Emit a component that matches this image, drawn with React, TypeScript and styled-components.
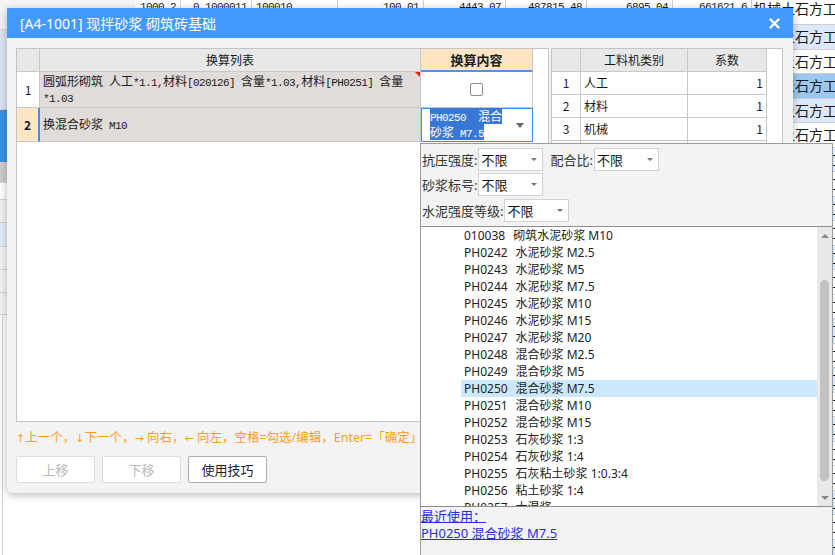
import React from "react";
import styled, { createGlobalStyle } from "styled-components";

const UI = `"Noto Sans", "Noto Sans CJK SC", sans-serif`;
const SONG = `"Noto Sans CJK SC", sans-serif`;

const GlobalStyle = createGlobalStyle`
  html, body { margin: 0; padding: 0; background: #fff; }
  body { font-family: ${UI}; color: #1a1a1a; }
  * { box-sizing: border-box; }
`;

// ---------- background sheet ----------
const Screen = styled.div`
  position: relative;
  width: 835px;
  height: 555px;
  overflow: hidden;
  background: #fff;
`;

const Back = styled.div`
  display: flex;
  height: 100%;
`;

const SidePane = styled.div`
  width: 135px;
  display: flex;
  flex-direction: column;
`;

const SideBlock = styled.div<{ $h: number; $bg: string }>`
  flex: 0 0 ${(p) => p.$h}px;
  background: ${(p) => p.$bg};
  border-bottom: 1px solid #d4d4d4;
`;

const SideRest = styled.div`
  flex: 1;
  margin-left: 2px;
  border-left: 1px solid #cfcfcf;
`;

const Sheet = styled.div`
  flex: 1;
  display: flex;
  flex-direction: column;
`;

const SheetRow = styled.div<{ $top?: boolean }>`
  flex: 0 0 ${(p) => (p.$top ? 25 : 24.5)}px;
  display: grid;
  grid-template-columns: 46px 71px 86px 86px 82px 81px 86px 79px 1fr;
`;

const SheetCell = styled.div<{ $left?: boolean; $bg: string; $on: boolean }>`
  border-right: ${(p) => (p.$on ? "1px solid #cfcfcf" : "none")};
  border-bottom: ${(p) => (p.$on ? "1px solid #cfcfcf" : "none")};
  background: ${(p) => (p.$on ? p.$bg : "transparent")};
  padding: 0 4px;
  font-family: "Liberation Mono", monospace;
  font-size: 11px;
  letter-spacing: -0.6px;
  line-height: 15px;
  text-align: ${(p) => (p.$left ? "left" : "right")};
  white-space: nowrap;
  overflow: hidden;
`;

const SheetName = styled.div<{ $bg: string; $top?: boolean }>`
  display: flex;
  align-items: ${(p) => (p.$top ? "flex-start" : "center")};
  padding-left: 1px;
  background: ${(p) => p.$bg};
  border-bottom: 1px solid #cfcfcf;
  font-family: ${SONG};
  font-size: 14px;
  line-height: 17px;
  white-space: nowrap;
  overflow: hidden;
`;

// ---------- dialog ----------
const Dialog = styled.div`
  position: absolute;
  left: 7px;
  top: 8px;
  width: 786px;
  height: 485px;
  background: #f3f3f3;
  border-radius: 2px 2px 5px 5px;
  box-shadow: 0 2px 9px rgba(0, 0, 0, 0.28);
  display: flex;
  flex-direction: column;
`;

const TitleBar = styled.div`
  flex: 0 0 30px;
  background: #4499ff;
  color: #fff;
  display: flex;
  align-items: center;
  justify-content: space-between;
  padding: 0 13px 0 13px;
  font-size: 14px;
`;

const Body = styled.div`
  flex: 1;
  padding: 10px 10px 10px 9px;
  display: flex;
  flex-direction: column;
`;

const Panels = styled.div`
  flex: 0 0 374px;
  display: flex;
  gap: 2px;
`;

const LeftGrid = styled.div`
  width: 533px;
  background: #fff;
  border: 1px solid #c4c4c4;
  display: grid;
  grid-template-columns: 23px 381px 112px 1fr;
  grid-template-rows: 23px 36px 34px;
  align-content: start;
  font-family: ${SONG};
  font-size: 12px;
`;

const RightGrid = styled.div`
  width: 232px;
  background: #fff;
  border: 1px solid #c4c4c4;
  display: grid;
  grid-template-columns: 29px 107px 79px 1fr;
  grid-template-rows: 23px 23px 23px 23px 23px;
  align-content: start;
  font-family: ${SONG};
  font-size: 12px;
`;

const Cell = styled.div<{
  $bg?: string;
  $align?: "left" | "center" | "right";
  $bold?: boolean;
  $size?: number;
  $mark?: "blue" | "active";
  $plain?: boolean;
}>`
  position: relative;
  display: flex;
  align-items: center;
  justify-content: ${(p) =>
    p.$align === "center" ? "center" : p.$align === "right" ? "flex-end" : "flex-start"};
  padding: 0 3px;
  background: ${(p) => p.$bg || "#fff"};
  border-right: ${(p) =>
    p.$plain ? "none" : p.$mark === "active" ? "2px solid #3e8fe9" : "1px solid #c8c8c8"};
  border-bottom: ${(p) =>
    p.$plain ? "none" : p.$mark === "blue" ? "2px solid #4a96ec" : "1px solid #c8c8c8"};
  font-weight: ${(p) => (p.$bold ? 700 : 400)};
  font-size: ${(p) => p.$size || 12}px;
  line-height: 14px;
  color: #1a1a1a;
`;

const Corner = styled.span`
  position: absolute;
  right: 0;
  top: 0;
  width: 0;
  height: 0;
  border-top: 5px solid #ff1a1a;
  border-left: 5px solid transparent;
`;

const Half = styled.span`
  font-family: "Liberation Mono", monospace;
  font-size: 11px;
  letter-spacing: -0.6px;
`;

const Check = styled.span`
  width: 13px;
  height: 13px;
  border: 1px solid #8c8c8c;
  border-radius: 2px;
  background: #fff;
`;

const Editor = styled.div`
  grid-column: 3;
  grid-row: 3;
  border: 1px solid #3d8de8;
  background: #fff;
  display: flex;
  align-items: center;
  padding: 0 8px 0 8px;
`;

const EditorText = styled.div`
  width: 78px;
  font-family: ${SONG};
  font-size: 12px;
  line-height: 13px;
  white-space: pre-wrap;
  span.sel {
    background: #3778d6;
    color: #fff;
  }
`;

const Caret = styled.span`
  margin-left: auto;
  width: 0;
  height: 0;
  border-left: 4px solid transparent;
  border-right: 4px solid transparent;
  border-top: 5px solid #666;
`;

const Hint = styled.div`
  margin-top: 8px;
  height: 16px;
  line-height: 16px;
  font-size: 12.5px;
  color: #ff9d1c;
  white-space: nowrap;
`;

const Arrow = styled.span`
  font-family: "DejaVu Sans", sans-serif;
  font-size: 11px;
`;

const Buttons = styled.div`
  margin-top: 10px;
  display: flex;
  gap: 7px;
`;

const Btn = styled.button<{ $off?: boolean }>`
  width: 79px;
  height: 27px;
  background: #fff;
  border: 1px solid ${(p) => (p.$off ? "#dcdcdc" : "#adadad")};
  border-radius: 2px;
  font-family: ${UI};
  font-size: 13px;
  color: ${(p) => (p.$off ? "#b9b9b9" : "#1e1e1e")};
  padding: 0;
`;

// ---------- dropdown popup ----------
const Popup = styled.div`
  position: absolute;
  left: 420px;
  top: 143px;
  width: 413px;
  height: 412px;
  background: #f3f3f3;
  border: 1px solid #9c9c9c;
  border-bottom: none;
  display: flex;
  flex-direction: column;
`;

const Filters = styled.div`
  padding: 4px 0 4px 1px;
  display: flex;
  flex-direction: column;
  gap: 2px;
`;

const FilterRow = styled.div<{ $gap?: number }>`
  display: flex;
  align-items: center;
  height: 23px;
  margin-top: ${(p) => p.$gap || 0}px;
`;

const Label = styled.span`
  font-size: 13px;
  color: #333;
  margin-right: 1px;
`;

const Select = styled.div`
  width: 65px;
  height: 23px;
  background: #fff;
  border: 1px solid #d3d3d3;
  display: flex;
  align-items: center;
  justify-content: space-between;
  padding: 0 5px 0 2px;
  font-size: 13px;
  color: #111;
  margin-right: 7px;
`;

const SmallCaret = styled.span`
  width: 0;
  height: 0;
  border-left: 3px solid transparent;
  border-right: 3px solid transparent;
  border-top: 3px solid #777;
`;

const ListBox = styled.div`
  flex: 0 0 281px;
  background: #fff;
  border-top: 1px solid #8e8e8e;
  border-bottom: 1px solid #8e8e8e;
  display: flex;
  overflow: hidden;
`;

const Items = styled.div`
  flex: 1;
  padding-left: 40px;
  overflow: hidden;
`;

const Item = styled.div<{ $sel?: boolean }>`
  height: 17px;
  line-height: 17px;
  padding-left: 3px;
  font-size: 12px;
  color: #222;
  white-space: pre;
  background: ${(p) => (p.$sel ? "#cce8ff" : "transparent")};
`;

const ItemName = styled.span`
  margin-left: 8px;
`;

const ScrollBar = styled.div`
  flex: 0 0 15px;
  background: #e9e9e9;
  display: flex;
  flex-direction: column;
  align-items: center;
`;

const ScrollArrow = styled.div<{ $down?: boolean }>`
  flex: 0 0 17px;
  display: flex;
  align-items: center;
  justify-content: center;
  &::after {
    content: "";
    border-left: 4px solid transparent;
    border-right: 4px solid transparent;
    ${(p) => (p.$down ? "border-top: 4px solid #8a8a8a;" : "border-bottom: 4px solid #8a8a8a;")}
  }
`;

const Track = styled.div`
  flex: 1;
  width: 100%;
  display: flex;
  justify-content: center;
`;

const Thumb = styled.div`
  margin-top: 36px;
  width: 9px;
  height: 201px;
  border-radius: 5px;
  background: #c2c2c2;
`;

const Recent = styled.div`
  padding: 1px 0 0 0;
  display: flex;
  flex-direction: column;
  align-items: flex-start;
`;

const RecentLink = styled.a`
  font-size: 13px;
  line-height: 17px;
  color: #2a2ae6;
  text-decoration: underline;
`;

// ---------- data ----------
const sheetTop = ["1000.2", "0.1000011", "100010", "100.01", "4443.07", "487815.48", "6895.04", "661621.6"];
const rowBgs = ["#fff", "#dce8fb", "#fff", "#9bc8f2", "#dce8fb", "#fff", "#dce8fb", "#fff", "#dce8fb", "#fff", "#dce8fb", "#fff", "#fff", "#dce8fb", "#fff", "#dce8fb", "#fff", "#dce8fb", "#fff", "#fff", "#dce8fb", "#fff", "#dce8fb"];

const sideBlocks: [number, string][] = [
  [30, "#f5f5f5"],
  [80, "#dbe5f3"],
  [53, "#3d8fe8"],
  [20, "#cdcdcd"],
  [17, "#ffffff"],
  [23, "#f2f2f2"],
  [24, "#e4edfa"],
  [23, "#f4f4f4"],
  [23, "#f4f4f4"],
  [22, "#f4f4f4"],
];

const mortars: [string, string][] = [
  ["010038", "砌筑水泥砂浆 M10"],
  ["PH0242", "水泥砂浆 M2.5"],
  ["PH0243", "水泥砂浆 M5"],
  ["PH0244", "水泥砂浆 M7.5"],
  ["PH0245", "水泥砂浆 M10"],
  ["PH0246", "水泥砂浆 M15"],
  ["PH0247", "水泥砂浆 M20"],
  ["PH0248", "混合砂浆 M2.5"],
  ["PH0249", "混合砂浆 M5"],
  ["PH0250", "混合砂浆 M7.5"],
  ["PH0251", "混合砂浆 M10"],
  ["PH0252", "混合砂浆 M15"],
  ["PH0253", "石灰砂浆 1:3"],
  ["PH0254", "石灰砂浆 1:4"],
  ["PH0255", "石灰粘土砂浆 1:0.3:4"],
  ["PH0256", "粘土砂浆 1:4"],
  ["PH0257", "大混浆"],
];

const kinds = ["人工", "材料", "机械"];

// ascii runs drawn half width, like the song-style grid font
const Mixed = ({ text }: { text: string }) => (
  <>
    {text.split(/([\x20-\x7e]+)/).map((part, i) =>
      /^[\x20-\x7e]+$/.test(part) ? <Half key={i}>{part}</Half> : part
    )}
  </>
);

const CloseIcon = () => (
  <svg width="11" height="11" viewBox="0 0 11 11">
    <path d="M1.5 1.5 L9.5 9.5 M9.5 1.5 L1.5 9.5" stroke="#fff" strokeWidth="2.4" strokeLinecap="round" />
  </svg>
);

const Filter = ({ label }: { label: string }) => (
  <>
    <Label>{label}</Label>
    <Select>
      不限
      <SmallCaret />
    </Select>
  </>
);

export default function App() {
  return (
    <Screen>
      <GlobalStyle />
      <Back>
        <SidePane>
          {sideBlocks.map(([h, bg], i) => (
            <SideBlock key={i} $h={h} $bg={bg} />
          ))}
          <SideRest />
        </SidePane>
        <Sheet>
          {rowBgs.map((bg, r) => (
            <SheetRow key={r} $top={r === 0}>
              {sheetTop.map((v, c) => (
                <SheetCell key={c} $left={c === 2} $bg={bg} $on={r < 13}>
                  {r === 0 ? v : ""}
                </SheetCell>
              ))}
              <SheetName $bg={bg} $top={r === 0}>机械土石方工程</SheetName>
            </SheetRow>
          ))}
        </Sheet>
      </Back>

      <Dialog>
        <TitleBar>
          <span>[A4-1001] 现拌砂浆 砌筑砖基础</span>
          <CloseIcon />
        </TitleBar>
        <Body>
          <Panels>
            <LeftGrid>
              <Cell $bg="#e8e8e8" />
              <Cell $bg="#e8e8e8" $align="center">换算列表</Cell>
              <Cell $bg="#fde5c4" $align="center" $bold $size={13} $mark="blue">换算内容</Cell>
              <Cell $plain />

              <Cell $align="center">1</Cell>
              <Cell $bg="#e0dcd9">
                <span>
                  <Mixed text="圆弧形砌筑 人工*1.1,材料[020126] 含量*1.03,材料[PH0251] 含量*1.03" />
                </span>
                <Corner />
              </Cell>
              <Cell $align="center">
                <Check />
              </Cell>
              <Cell $plain />

              <Cell $bg="#fde6c6" $align="center" $bold $mark="active">2</Cell>
              <Cell $bg="#e0dcd9">
                <span>
                  <Mixed text="换混合砂浆 M10" />
                </span>
              </Cell>
              <Editor>
                <EditorText>
                  <span className="sel">
                    <Mixed text="PH0250  混合砂浆 M7.5" />
                  </span>
                </EditorText>
                <Caret />
              </Editor>
              <Cell $plain />
            </LeftGrid>

            <RightGrid>
              <Cell $bg="#e8e8e8" />
              <Cell $bg="#e8e8e8" $align="center">工料机类别</Cell>
              <Cell $bg="#e8e8e8" $align="center">系数</Cell>
              <Cell $plain />
              {kinds.map((k, i) => (
                <React.Fragment key={k}>
                  <Cell $align="center">{i + 1}</Cell>
                  <Cell>{k}</Cell>
                  <Cell $align="right">1</Cell>
                  <Cell $plain />
                </React.Fragment>
              ))}
              <Cell />
              <Cell />
              <Cell />
              <Cell $plain />
            </RightGrid>
          </Panels>

          <Hint>
            <Arrow>↑</Arrow>上一个，<Arrow>↓</Arrow>下一个，<Arrow>→</Arrow> 向右，<Arrow>←</Arrow> 向左，空格=勾选/编辑，Enter=「确定」
          </Hint>

          <Buttons>
            <Btn $off>上移</Btn>
            <Btn $off>下移</Btn>
            <Btn>使用技巧</Btn>
          </Buttons>
        </Body>
      </Dialog>

      <Popup>
        <Filters>
          <FilterRow>
            <Filter label="抗压强度:" />
            <Filter label="配合比:" />
          </FilterRow>
          <FilterRow>
            <Filter label="砂浆标号:" />
          </FilterRow>
          <FilterRow $gap={1}>
            <Filter label="水泥强度等级:" />
          </FilterRow>
        </Filters>
        <ListBox>
          <Items>
            {mortars.map(([code, name]) => (
              <Item key={code} $sel={code === "PH0250"}>
                {code}
                <ItemName>{name}</ItemName>
              </Item>
            ))}
          </Items>
          <ScrollBar>
            <ScrollArrow />
            <Track>
              <Thumb />
            </Track>
            <ScrollArrow $down />
          </ScrollBar>
        </ListBox>
        <Recent>
          <RecentLink>最近使用：</RecentLink>
          <RecentLink>PH0250 混合砂浆 M7.5</RecentLink>
        </Recent>
      </Popup>
    </Screen>
  );
}
